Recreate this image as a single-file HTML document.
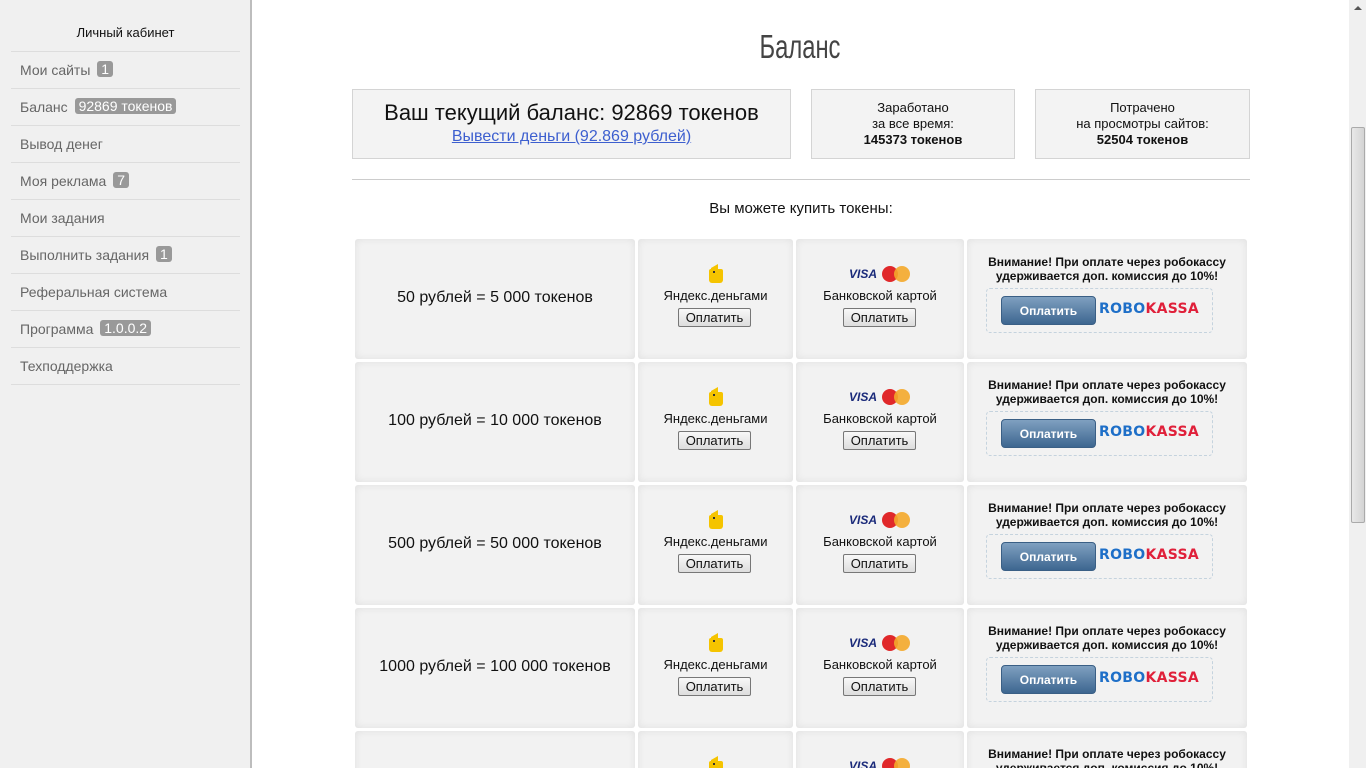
<!DOCTYPE html>
<html><head><meta charset="utf-8"><style>
*{margin:0;padding:0;box-sizing:border-box}
html,body{width:1366px;height:768px;overflow:hidden}
body{background:#fff;font-family:"Liberation Sans",Arial,sans-serif;position:relative;color:#222}
#wrap{position:absolute;left:0;top:0;width:1366px;height:768px;overflow:hidden}
.side{position:absolute;left:0;top:0;width:252px;height:768px;background:#f0f0f0;border-right:2px solid #bdbdbd}
.side .h{position:absolute;left:11px;width:229px;top:22px;height:30px;text-align:center;font-size:13px;line-height:22px;color:#111;border-bottom:1px solid #ddd}
.it{position:absolute;left:11px;width:229px;height:37px;border-bottom:1px solid #ddd;font-size:14px;color:#666;padding-left:9px;line-height:36px}
.b{display:inline-block;background:#999;color:#fff;border-radius:3px;font-size:14px;line-height:16px;padding:0 4px;margin-left:3px;vertical-align:1px}
.title{position:absolute;left:700px;width:200px;top:28px;text-align:center;font-size:33px;font-weight:300;color:#444;transform:scaleX(.72)}
.box{position:absolute;top:89px;height:70px;background:#f3f3f3;border:1px solid #d4d4d4;text-align:center}
.hr{position:absolute;left:352px;width:898px;top:179px;border-top:1px solid #ccc}
.cell{position:absolute;background:#f2f2f2;border-radius:3px;box-shadow:inset 0 0 8px rgba(0,0,0,.08);height:120px}
.c{position:absolute;left:0;right:0;text-align:center}
.btn{position:absolute;height:19px;width:73px;border:1px solid #777;border-radius:2px;background:linear-gradient(#f8f8f8,#ddd);font-size:13px;line-height:17px;text-align:center;color:#111}
.ya{position:absolute;width:14px;height:14px;background:#f5c400;border-radius:2px 2px 3px 3px}
.ya:before{content:"";position:absolute;left:2px;top:-3px;width:7px;height:7px;background:#f5c400;transform:skewY(-30deg)}
.ya:after{content:"";position:absolute;left:4px;top:2px;width:2px;height:2px;background:#333}
.rk{position:absolute;left:19px;top:49px;width:227px;height:45px;border:1px dashed #c5d3de;border-radius:4px}
.rb{position:absolute;left:14px;top:7px;width:95px;height:29px;border-radius:4px;background:linear-gradient(#7fa0c0,#3d6690);color:#fff;font-weight:bold;font-size:12px;text-align:center;line-height:28px;border:1px solid #3a5f85}
.rl{position:absolute;left:112px;top:12px;font-weight:bold;font-size:14px;letter-spacing:.3px;font-family:"DejaVu Sans",sans-serif}
</style></head><body><div id="wrap">
<div class="side">
<div class="h">Личный кабинет</div>
<div class="it" style="top:52px">Мои сайты <span class="b">1</span></div>
<div class="it" style="top:89px">Баланс <span class="b">92869 токенов</span></div>
<div class="it" style="top:126px">Вывод денег</div>
<div class="it" style="top:163px">Моя реклама <span class="b">7</span></div>
<div class="it" style="top:200px">Мои задания</div>
<div class="it" style="top:237px">Выполнить задания <span class="b">1</span></div>
<div class="it" style="top:274px">Реферальная система</div>
<div class="it" style="top:311px">Программа <span class="b">1.0.0.2</span></div>
<div class="it" style="top:348px">Техподдержка</div>
</div>
<div class="title">Баланс</div>
<div class="box" style="left:352px;width:439px"><div style="font-size:22px;color:#111;margin-top:10px">Ваш текущий баланс: 92869 токенов</div><div style="font-size:16px;color:#3d5fcf;text-decoration:underline;margin-top:2px">Вывести деньги (92.869 рублей)</div></div>
<div class="box" style="left:811px;width:204px;font-size:13px;line-height:16px;padding-top:10px;color:#111">Заработано<br>за все время:<br><b>145373 токенов</b></div>
<div class="box" style="left:1035px;width:215px;font-size:13px;line-height:16px;padding-top:10px;color:#111">Потрачено<br>на просмотры сайтов:<br><b>52504 токенов</b></div>
<div class="hr"></div>
<div style="position:absolute;left:352px;width:898px;top:200px;text-align:center;font-size:15px;color:#111">Вы можете купить токены:</div>
<div id="rows"></div>
<div style="position:absolute;left:1349px;top:0;width:17px;height:768px;background:#f0f0f0"></div>
<div style="position:absolute;left:1354px;top:6px;width:0;height:0;border-left:4px solid transparent;border-right:4px solid transparent;border-bottom:4px solid #555"></div>
<div style="position:absolute;left:1351px;top:127px;width:14px;height:396px;border:1px solid #aaa;border-radius:2px;background:linear-gradient(90deg,#e8e8e8,#d4d4d4)"></div>
</div>
<script>
var d=["50 рублей = 5 000 токенов","100 рублей = 10 000 токенов","500 рублей = 50 000 токенов","1000 рублей = 100 000 токенов","5000 рублей = 500 000 токенов"];
var h="";
d.forEach(function(r,i){var t=239+i*123;
h+='<div class="cell" style="left:355px;top:'+t+'px;width:280px"><div class="c" style="top:50px;font-size:16px;color:#111">'+r+'</div></div>';
h+='<div class="cell" style="left:638px;top:'+t+'px;width:155px"><div class="ya" style="left:71px;top:30px"></div><div class="c" style="top:49px;font-size:13px;color:#111">Яндекс.деньгами</div><div class="btn" style="left:40px;top:69px">Оплатить</div></div>';
h+='<div class="cell" style="left:796px;top:'+t+'px;width:168px"><div style="position:absolute;left:53px;top:28px;font:italic bold 12px \'Liberation Sans\';color:#1a2a7a">VISA</div><div style="position:absolute;left:86px;top:27px;width:16px;height:16px;border-radius:50%;background:#e0282a"></div><div style="position:absolute;left:98px;top:27px;width:16px;height:16px;border-radius:50%;background:#f4a92a;opacity:.9"></div><div class="c" style="top:49px;font-size:13px;color:#111">Банковской картой</div><div class="btn" style="left:47px;top:69px">Оплатить</div></div>';
h+='<div class="cell" style="left:967px;top:'+t+'px;width:280px"><div class="c" style="top:16px;font-size:12px;font-weight:bold;line-height:14px;color:#111">Внимание! При оплате через робокассу<br>удерживается доп. комиссия до 10%!</div><div class="rk"><div class="rb">Оплатить</div><div class="rl"><span style="color:#1e6fc8">ROBO</span><span style="color:#e0203a">KASSA</span></div></div></div>';
});
document.getElementById("rows").innerHTML=h;
</script>
</body></html>
